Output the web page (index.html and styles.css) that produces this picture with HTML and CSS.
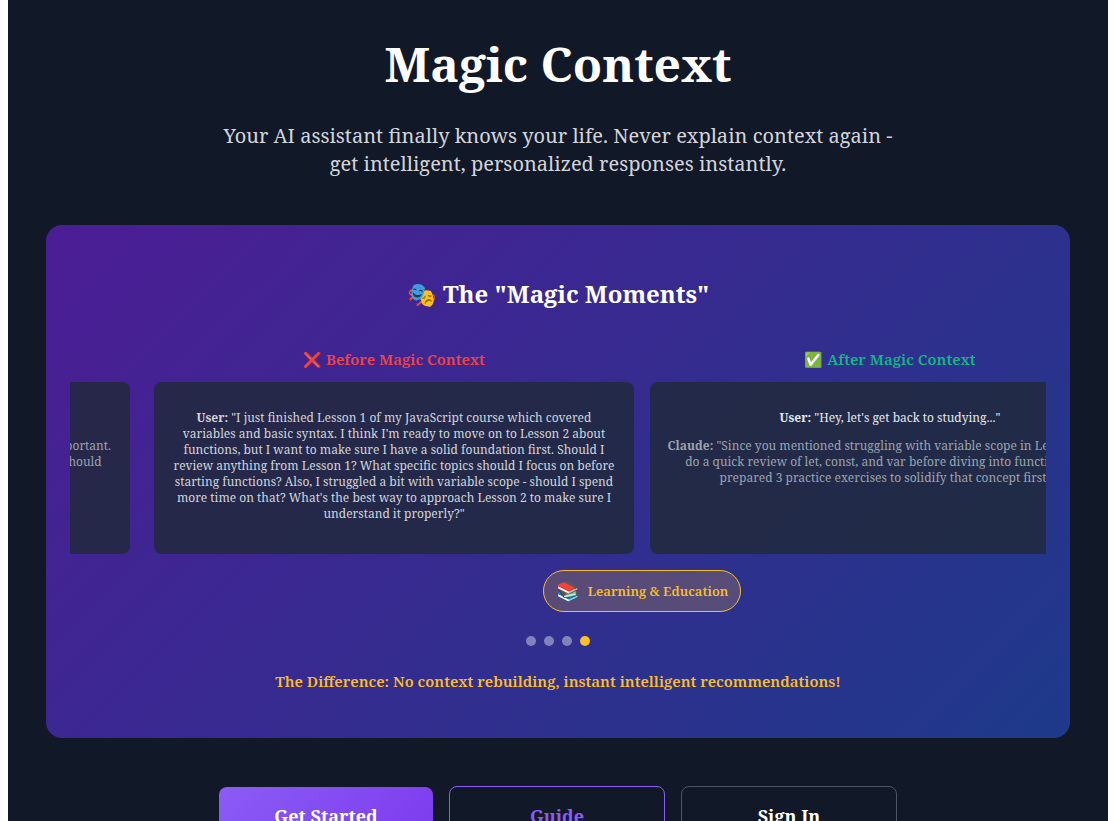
FILE: index.html
```html
<!DOCTYPE html>
<html lang="en">
<head>
<meta charset="utf-8">
<title>Magic Context</title>
<link rel="stylesheet" href="styles.css">
</head>
<body>
<main class="page">
  <header class="hero">
    <h1 class="hero-title">Magic Context</h1>
    <p class="hero-text">Your AI assistant finally knows your life. Never explain context again - get intelligent, personalized responses instantly.</p>
  </header>

  <section class="moments">
    <h2 class="moments-title">🎭 The "Magic Moments"</h2>
    <div class="viewport">
      <div class="track">
        <article class="slide slide-previous">
          <div class="card">
            <p class="user"><br></p>
            <p class="reply reply-tail">important.<br>should&nbsp;&nbsp;&nbsp;</p>
          </div>
        </article>
        <article class="slide">
          <div class="column">
            <h3 class="label label-before">❌ Before Magic Context</h3>
            <div class="card">
              <p class="user"><strong>User:</strong> "I just finished Lesson 1 of my JavaScript course which covered variables and basic syntax. I think I'm ready to move on to Lesson 2 about functions, but I want to make sure I have a solid foundation first. Should I review anything from Lesson 1? What specific topics should I focus on before starting functions? Also, I struggled a bit with variable scope - should I spend more time on that? What's the best way to approach Lesson 2 to make sure I understand it properly?"</p>
            </div>
          </div>
          <div class="column">
            <h3 class="label label-after">✅ After Magic Context</h3>
            <div class="card">
              <p class="user user-bright"><strong>User:</strong> "Hey, let's get back to studying..."</p>
              <p class="reply"><strong>Claude:</strong> "Since you mentioned struggling with variable scope in Lesson 1, let's do a quick review of let, const, and var before diving into functions. I've prepared 3 practice exercises to solidify that concept first..."</p>
            </div>
          </div>
          <p class="topic"><span class="topic-icon">📚</span><span>Learning &amp; Education</span></p>
        </article>
      </div>
    </div>
    <div class="dots">
      <button class="dot" type="button" aria-label="Slide 1"></button>
      <button class="dot" type="button" aria-label="Slide 2"></button>
      <button class="dot" type="button" aria-label="Slide 3"></button>
      <button class="dot dot-active" type="button" aria-label="Slide 4"></button>
    </div>
    <p class="difference">The Difference: No context rebuilding, instant intelligent recommendations!</p>
  </section>

  <nav class="actions">
    <a class="action action-primary" href="#start">Get Started</a>
    <a class="action action-guide" href="#guide">Guide</a>
    <a class="action action-plain" href="#signin">Sign In</a>
  </nav>
</main>
</body>
</html>
```
FILE: styles.css
```css
* {
  box-sizing: border-box;
}

html {
  height: 100%;
  overflow: hidden;
}

body {
  height: 100%;
  margin: 0 8px;
  overflow: hidden;
  background: #ffffff;
  font-family: "Noto Serif", serif;
}

h1, h2, h3, p {
  margin: 0;
}

.page {
  min-height: 100%;
  padding: 32px;
  background: #111827;
  color: #ffffff;
  text-align: center;
}

.hero {
  display: flex;
  flex-direction: column;
  align-items: center;
  gap: 26px;
  margin-bottom: 47px;
}

.hero-title {
  font-size: 48px;
  line-height: 64px;
}

.hero-text {
  max-width: 672px;
  color: #d1d5db;
  font-size: 20px;
  line-height: 28px;
}

.moments {
  max-width: 1024px;
  margin: 0 auto 48px;
  padding: 48px 24px 46px;
  border-radius: 16px;
  background: linear-gradient(135deg, #4c1d95 0%, #1e3a8a 100%);
}

.moments-title {
  margin-bottom: 35px;
  font-size: 24px;
  line-height: 42px;
}

.viewport {
  overflow: hidden;
}

/* The strip is caught between two stops, 84px to the right of the last one. */
.track {
  display: flex;
  align-items: flex-start;
  justify-content: flex-end;
  gap: 24px;
  margin-right: -84px;
}

.slide {
  display: grid;
  flex: 0 0 976px;
  grid-template-columns: 1fr 1fr;
  gap: 16px;
}

.slide-previous {
  flex-basis: 480px;
  grid-template-columns: 1fr;
  padding-top: 32px;
}

.column {
  display: flex;
  flex-direction: column;
  gap: 14px;
}

.label {
  font-size: 15px;
  font-weight: 600;
  line-height: 18px;
}

.label-before {
  color: #ef4444;
}

.label-after {
  color: #10b981;
}

.card {
  flex: 1;
  min-height: 172px;
  padding: 28px 16px 20px;
  border-radius: 8px;
  background: rgba(31, 41, 55, 0.8);
  font-size: 12px;
  line-height: 16px;
}

.user {
  margin-bottom: 12px;
  color: #d1d5db;
}

.user-bright {
  color: #e5e7eb;
}

.reply {
  color: #9ca3af;
}

.reply-tail {
  padding-right: 3px;
  text-align: right;
}

.topic {
  display: flex;
  grid-column: 1 / -1;
  align-items: center;
  justify-self: center;
  gap: 8px;
  padding: 8px 12px;
  border: 1px solid #fbbf24;
  border-radius: 24px;
  background: rgba(251, 191, 36, 0.2);
  color: #fbbf24;
  font-size: 13px;
  font-weight: 600;
  line-height: 24px;
}

.topic-icon {
  font-size: 19px;
}

.dots {
  display: flex;
  justify-content: center;
  gap: 8px;
  margin: 24px 0;
}

.dot {
  width: 10px;
  height: 10px;
  padding: 0;
  border: 0;
  border-radius: 50%;
  background: rgba(255, 255, 255, 0.4);
}

.dot-active {
  background: #fbbf24;
}

.difference {
  color: #fbbf24;
  font-size: 15px;
  font-weight: 600;
  line-height: 22px;
}

.actions {
  display: flex;
  align-items: center;
  justify-content: center;
  gap: 16px;
}

.action {
  min-width: 216px;
  padding: 16px 32px;
  border: 1px solid transparent;
  border-radius: 8px;
  font-size: 18px;
  font-weight: 700;
  line-height: 26px;
  text-decoration: none;
}

.action-primary {
  min-width: 214px;
  border: 0;
  background: linear-gradient(135deg, #8b5cf6 0%, #7c3aed 100%);
  color: #ffffff;
}

.action-guide {
  border-color: #8b5cf6;
  color: #8b5cf6;
}

.action-plain {
  border-color: #4b5563;
  color: #ffffff;
}
```
